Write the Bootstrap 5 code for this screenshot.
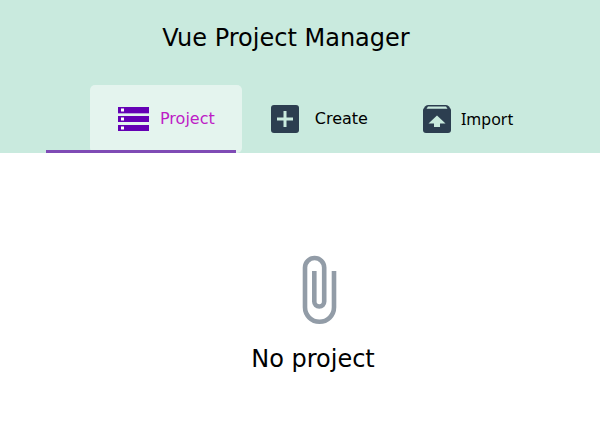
<!DOCTYPE html>
<html lang="en">
<head>
<meta charset="utf-8">
<meta name="viewport" content="width=device-width, initial-scale=1">
<title>Vue Project Manager</title>
<link href="https://cdn.jsdelivr.net/npm/bootstrap@5.3.0/dist/css/bootstrap.min.css" rel="stylesheet">
<style>
  body { font-family: "DejaVu Sans", Verdana, sans-serif; color: #000; background: #fff; }
  .app-header { background: #c9eade; padding-top: 20px; }
  .app-title { font-size: 24px; line-height: 36px; margin: 0 28px 29px 0; }
  .app-tabs { padding-left: 90px; }
  .app-tab { position: relative; height: 68px; font-size: 16px; line-height: 24px; color: #000; border-radius: 5px; padding: 0 27px 0 28px; }
  .app-tab:hover { color: #000; }
  .app-tab.active, .app-tab.active:hover { background: #e4f4ee; color: #bd1cc6; }
  .app-tab.active::after { content: ""; position: absolute; left: -44px; right: 6px; bottom: 0; height: 3px; background: #7f4bb5; }
  .app-tab svg { flex: none; }
  .tab-serif-cap { font-family: "Noto Sans", sans-serif; }
  .gap-tight { gap: 10px; }
  .gap-wide { gap: 16px; }
  .empty-state { padding: 102px 0 48px 26px; }
  .empty-icon { margin-left: 12px; }
  .empty-text { font-size: 24px; line-height: 36px; margin-top: 16px; }
</style>
<script src="https://cdn.jsdelivr.net/npm/bootstrap@5.3.0/dist/js/bootstrap.bundle.min.js"></script>
</head>
<body>
<header class="app-header">
  <h1 class="app-title text-center fw-normal">Vue Project Manager</h1>
  <nav class="app-tabs nav flex-nowrap" aria-label="Main">
    <a class="app-tab gap-tight active d-flex align-items-center text-decoration-none" href="#project" aria-current="page">
      <svg width="32" height="26" viewBox="0 0 32 26" aria-hidden="true"><path fill="#b9a0dd" d="M0 7h31v1H0zM0 15h31v1H0z"/><path fill="#6400b4" d="M0 1h31v6H0zM0 10h31v6H0zM0 19h31v6H0z"/><path fill="#fff" d="M3 2.500h3v3H3zM3 11.500h3v3H3zM3 20.500h3v3H3z"/></svg>
      <span>Project</span>
    </a>
    <a class="app-tab gap-wide d-flex align-items-center text-decoration-none" href="#create">
      <svg width="29" height="28" viewBox="0 0 29 28" aria-hidden="true"><rect x="1" width="28" height="28" rx="3" fill="#2c3e50"/><path d="M15 6v16M7 14h16" stroke="#c9eade" stroke-width="3"/></svg>
      <span>Create</span>
    </a>
    <a class="app-tab tab-serif-cap gap-tight d-flex align-items-center text-decoration-none" href="#import">
      <svg width="28" height="28" viewBox="0 0 28 28" aria-hidden="true"><path fill="#2c3e50" d="M5 0h18q2 0 3 1.500l2 3V25a3 3 0 0 1-3 3H3a3 3 0 0 1-3-3V4.500l2-3Q3 0 5 0z"/><path fill="#c9eade" d="M5 1.500h18l1.500 2.300h-21zM14 10.500l8.500 8H17v3.500h-6v-3.500H5.500z"/></svg>
      <span>Import</span>
    </a>
  </nav>
</header>
<main class="empty-state d-flex flex-column align-items-center">
  <svg class="empty-icon" width="35" height="70" viewBox="0 0 35 70" aria-hidden="true"><path fill="none" stroke="#929ca7" stroke-width="4.600" d="M32 16v36.300a14.500 14.500 0 0 1-29 0V12.600a9.600 9.600 0 0 1 19.200 0V46.500a4.950 4.950 0 0 1-9.900 0V16"/></svg>
  <p class="empty-text mb-0">No project</p>
</main>
</body>
</html>
